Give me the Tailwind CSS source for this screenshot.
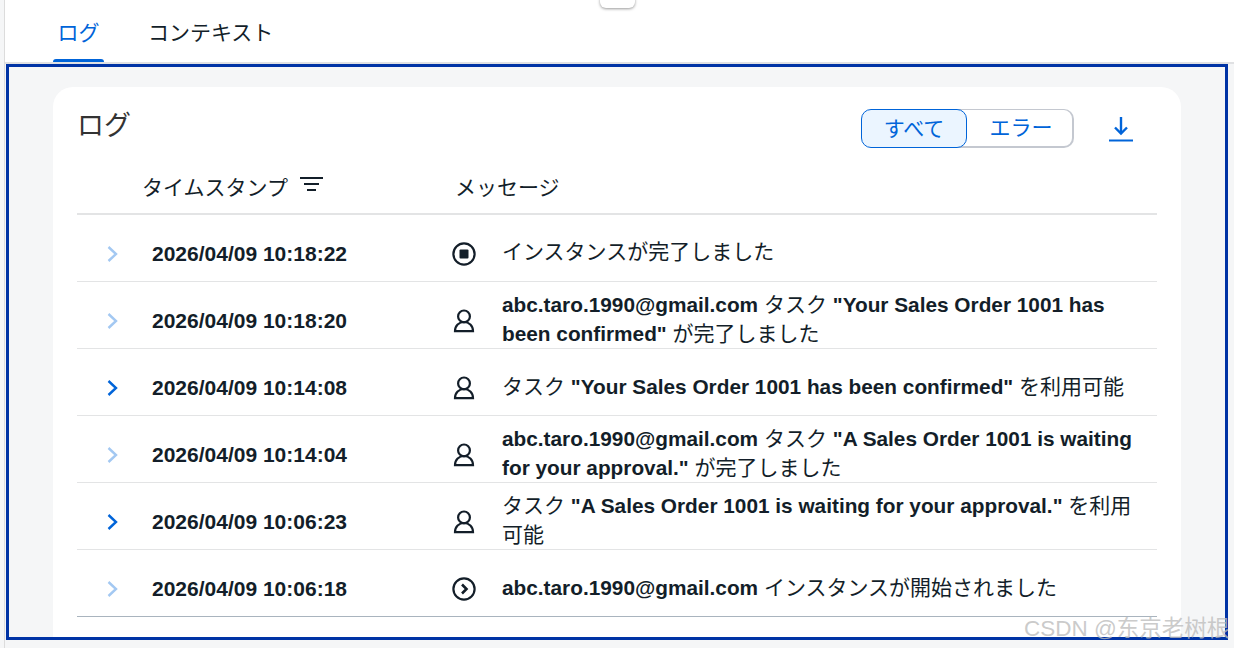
<!DOCTYPE html>
<html lang="ja">

<head>
    <meta charset="UTF-8" />
    <title>ログ</title>
    <script src="https://cdn.jsdelivr.net/npm/@tailwindcss/browser@4"></script>
</head>

<body class="bg-[#f5f6f7] h-[648px] w-[1234px] overflow-hidden font-['Liberation_Sans','Noto_Sans_CJK_JP',sans-serif] text-[21px] text-[#131e29] relative">
    <!-- left edge of the page -->
    <div class="flex h-[648px]">
        <div class="w-[5px] shrink-0 bg-[#f5f6f7] border-r border-[#dcdcdc]"></div>
        <div class="flex-1 min-w-0">
            <!-- tabs -->
            <div class="h-[64px] bg-white border-b-2 border-[#e0e1e3] flex pl-[48px] relative">
                <div class="w-[51px] h-[62px] flex justify-center pt-[15px] text-[#0064d9] relative leading-[36px]">
                    ログ
                    <div class="absolute bottom-0 left-0 right-0 h-[3px] bg-[#0064d9] rounded-t-[3px]"></div>
                </div>
                <div class="ml-[44px] pt-[15px] leading-[36px]">コンテキスト</div>
                <div class="absolute left-[595px] top-[-6px] w-[35px] h-[14px] bg-white rounded-[6px] shadow-[0_1px_3px_rgba(0,0,0,0.4)]"></div>
            </div>

            <!-- blue frame -->
            <div class="ml-[1px] w-[1222px] h-[576px] border-[3px] border-[#0033a5] bg-[#f5f6f7] pl-[44px] pr-[44px] pt-[20px] overflow-hidden">
                <div class="bg-white rounded-t-[20px] h-[560px] px-[24px]">
                    <!-- card header -->
                    <div class="flex items-start h-[128px] border-b-2 border-[#e3e4e5] relative">
                        <div class="mt-[17px] text-[27px] leading-[44px] text-[#333]">ログ</div>
                        <div class="absolute left-[784px] top-[22px] flex w-[213px] h-[39px]">
                            <div class="w-[106px] h-[39px] bg-[#ebf5ff] border border-[#0064d9] rounded-[10px] flex items-center justify-center text-[#0064d9] relative z-10">すべて</div>
                            <div class="w-[116px] -ml-[9px] h-[39px] bg-white border border-[#c4c8d0] border-r-2 border-b-2 rounded-[10px] rounded-l-none border-l-0 flex items-center justify-center pl-[12px] text-[#0064d9]">エラー</div>
                        </div>
                        <svg class="absolute left-[1032px] top-[29px]" width="24" height="26" viewBox="0 0 24 26" fill="none" stroke="#0064d9">
                            <path d="M12 1V17" stroke-width="2.4" />
                            <path d="M6 11.5L12 17.5L18 11.5" stroke-width="2.4" />
                            <path d="M0 24.5H24" stroke-width="2" />
                        </svg>
                        <div class="absolute left-[65px] top-[83px] leading-[36px]">タイムスタンプ</div>
                        <svg class="absolute left-[223px] top-[90px]" width="24" height="15" viewBox="0 0 24 15" fill="#131e29">
                            <rect x="0" y="0" width="23" height="2" />
                            <rect x="4" y="6" width="15" height="2" />
                            <rect x="7" y="12" width="9" height="2" />
                        </svg>
                        <div class="absolute left-[378px] top-[83px] leading-[36px]">メッセージ</div>
                    </div>

                    <!-- rows -->
                    <div class="h-[67px] flex items-center border-b border-[#e3e4e5] pt-[12px]">
                        <svg class="ml-[30px] w-[11px] h-[16px] shrink-0" viewBox="0 0 11 16" fill="none" stroke="#a3c8f2" stroke-width="2.4"><path d="M1.5 1L9 8L1.5 15" /></svg>
                        <div class="ml-[34px] w-[300px] shrink-0 font-bold">2026/04/09 10:18:22</div>
                        <svg class="w-[24px] h-[24px] shrink-0" viewBox="0 0 24 24" fill="none" stroke="#131e29" stroke-width="2.2"><circle cx="12" cy="12" r="10.6" /><rect x="7.5" y="7.5" width="9" height="9" rx="1" fill="#131e29" stroke="none" /></svg>
                        <div class="ml-[26px] w-[640px] leading-[30px] -mt-[5px]">インスタンスが完了しました</div>
                    </div>
                    <div class="h-[67px] flex items-center border-b border-[#e3e4e5] pt-[12px]">
                        <svg class="ml-[30px] w-[11px] h-[16px] shrink-0" viewBox="0 0 11 16" fill="none" stroke="#a3c8f2" stroke-width="2.4"><path d="M1.5 1L9 8L1.5 15" /></svg>
                        <div class="ml-[34px] w-[300px] shrink-0 font-bold">2026/04/09 10:18:20</div>
                        <svg class="w-[24px] h-[24px] shrink-0" viewBox="0 0 24 24" fill="none" stroke="#131e29" stroke-width="2.2"><circle cx="12" cy="7.4" r="5.9" /><path d="M3 22.2C3 16.5 7 13 12 13C17 13 21 16.5 21 22.2H3Z" /></svg>
                        <div class="ml-[26px] w-[640px] leading-[29px] -mt-[5px]"><b class="text-[20.8px]">abc.taro.1990@gmail.com</b> タスク <b class="text-[20.8px]">"Your Sales Order 1001 has been confirmed"</b> が完了しました</div>
                    </div>
                    <div class="h-[67px] flex items-center border-b border-[#e3e4e5] pt-[12px]">
                        <svg class="ml-[30px] w-[11px] h-[16px] shrink-0" viewBox="0 0 11 16" fill="none" stroke="#0064d9" stroke-width="2.4"><path d="M1.5 1L9 8L1.5 15" /></svg>
                        <div class="ml-[34px] w-[300px] shrink-0 font-bold">2026/04/09 10:14:08</div>
                        <svg class="w-[24px] h-[24px] shrink-0" viewBox="0 0 24 24" fill="none" stroke="#131e29" stroke-width="2.2"><circle cx="12" cy="7.4" r="5.9" /><path d="M3 22.2C3 16.5 7 13 12 13C17 13 21 16.5 21 22.2H3Z" /></svg>
                        <div class="ml-[26px] w-[640px] leading-[30px] -mt-[3px]">タスク <b class="text-[20.8px]">"Your Sales Order 1001 has been confirmed"</b> を利用可能</div>
                    </div>
                    <div class="h-[67px] flex items-center border-b border-[#e3e4e5] pt-[12px]">
                        <svg class="ml-[30px] w-[11px] h-[16px] shrink-0" viewBox="0 0 11 16" fill="none" stroke="#a3c8f2" stroke-width="2.4"><path d="M1.5 1L9 8L1.5 15" /></svg>
                        <div class="ml-[34px] w-[300px] shrink-0 font-bold">2026/04/09 10:14:04</div>
                        <svg class="w-[24px] h-[24px] shrink-0" viewBox="0 0 24 24" fill="none" stroke="#131e29" stroke-width="2.2"><circle cx="12" cy="7.4" r="5.9" /><path d="M3 22.2C3 16.5 7 13 12 13C17 13 21 16.5 21 22.2H3Z" /></svg>
                        <div class="ml-[26px] w-[640px] leading-[29px] -mt-[5px]"><b class="text-[20.8px]">abc.taro.1990@gmail.com</b> タスク <b class="text-[20.8px]">"A Sales Order 1001 is waiting for your approval."</b> が完了しました</div>
                    </div>
                    <div class="h-[67px] flex items-center border-b border-[#e3e4e5] pt-[12px]">
                        <svg class="ml-[30px] w-[11px] h-[16px] shrink-0" viewBox="0 0 11 16" fill="none" stroke="#0064d9" stroke-width="2.4"><path d="M1.5 1L9 8L1.5 15" /></svg>
                        <div class="ml-[34px] w-[300px] shrink-0 font-bold">2026/04/09 10:06:23</div>
                        <svg class="w-[24px] h-[24px] shrink-0" viewBox="0 0 24 24" fill="none" stroke="#131e29" stroke-width="2.2"><circle cx="12" cy="7.4" r="5.9" /><path d="M3 22.2C3 16.5 7 13 12 13C17 13 21 16.5 21 22.2H3Z" /></svg>
                        <div class="ml-[26px] w-[640px] leading-[29px] -mt-[5px]">タスク <b class="text-[20.8px]">"A Sales Order 1001 is waiting for your approval."</b> を利用可能</div>
                    </div>
                    <div class="h-[67px] flex items-center border-b border-[#a9b4be] pt-[12px]">
                        <svg class="ml-[30px] w-[11px] h-[16px] shrink-0" viewBox="0 0 11 16" fill="none" stroke="#a3c8f2" stroke-width="2.4"><path d="M1.5 1L9 8L1.5 15" /></svg>
                        <div class="ml-[34px] w-[300px] shrink-0 font-bold">2026/04/09 10:06:18</div>
                        <svg class="w-[24px] h-[24px] shrink-0" viewBox="0 0 24 24" fill="none" stroke="#131e29" stroke-width="2.2"><circle cx="12" cy="12" r="10.6" /><path d="M10 7.5L14.5 12L10 16.5" stroke-width="2.6" /></svg>
                        <div class="ml-[26px] w-[640px] leading-[30px] -mt-[3px]"><b class="text-[20.8px]">abc.taro.1990@gmail.com</b> インスタンスが開始されました</div>
                    </div>
                </div>
            </div>
        </div>
    </div>

    <!-- CSDN watermark -->
    <div class="absolute left-[1024px] top-[613px] whitespace-nowrap text-[22.5px] leading-[32px] text-[#bdbdbd]/80 font-['Liberation_Sans','Noto_Sans_CJK_SC',sans-serif]">CSDN @东京老树根</div>
</body>

</html>
